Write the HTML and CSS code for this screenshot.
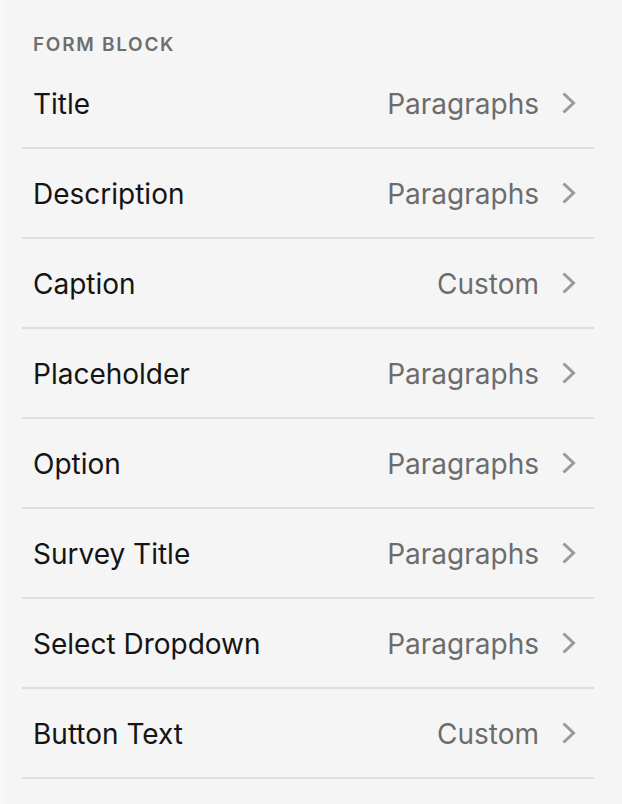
FILE: index.html
```html
<!DOCTYPE html>
<html>
<head>
<meta charset="utf-8">
<link rel="stylesheet" href="styles.css">
</head>
<body>
<div class="panel">
  <div class="section-title">FORM BLOCK</div>
  <ul class="list">
    <li class="row"><span class="label">Title</span><span class="value">Paragraphs</span><svg class="chev" viewBox="0 0 16 22"><path d="M3.5 1.5 L13.5 11 L3.5 20.5"/></svg></li>
    <li class="row"><span class="label">Description</span><span class="value">Paragraphs</span><svg class="chev" viewBox="0 0 16 22"><path d="M3.5 1.5 L13.5 11 L3.5 20.5"/></svg></li>
    <li class="row"><span class="label">Caption</span><span class="value">Custom</span><svg class="chev" viewBox="0 0 16 22"><path d="M3.5 1.5 L13.5 11 L3.5 20.5"/></svg></li>
    <li class="row"><span class="label">Placeholder</span><span class="value">Paragraphs</span><svg class="chev" viewBox="0 0 16 22"><path d="M3.5 1.5 L13.5 11 L3.5 20.5"/></svg></li>
    <li class="row"><span class="label">Option</span><span class="value">Paragraphs</span><svg class="chev" viewBox="0 0 16 22"><path d="M3.5 1.5 L13.5 11 L3.5 20.5"/></svg></li>
    <li class="row"><span class="label">Survey Title</span><span class="value">Paragraphs</span><svg class="chev" viewBox="0 0 16 22"><path d="M3.5 1.5 L13.5 11 L3.5 20.5"/></svg></li>
    <li class="row"><span class="label">Select Dropdown</span><span class="value">Paragraphs</span><svg class="chev" viewBox="0 0 16 22"><path d="M3.5 1.5 L13.5 11 L3.5 20.5"/></svg></li>
    <li class="row"><span class="label">Button Text</span><span class="value">Custom</span><svg class="chev" viewBox="0 0 16 22"><path d="M3.5 1.5 L13.5 11 L3.5 20.5"/></svg></li>
  </ul>
</div>
</body>
</html>
```

FILE: styles.css
```css
html, body {
  margin: 0;
  padding: 0;
  background: #f5f5f5;
}
body {
  width: 622px;
  height: 804px;
  overflow: hidden;
  font-family: Inter, "Liberation Sans", sans-serif;
  border-left: 5px solid #f7f7f7;
  box-sizing: border-box;
}
.panel {
  padding: 0 28px 0 17px;
}
.section-title {
  height: 59px;
  box-sizing: border-box;
  padding: 35px 0 0 11px;
  font-size: 19px;
  line-height: 20px;
  font-weight: 600;
  letter-spacing: 1.7px;
  color: #6e6e6e;
}
.list {
  list-style: none;
  margin: 0;
  padding: 0;
}
.row {
  display: flex;
  align-items: center;
  height: 86px;
  border-bottom: 2px solid #dedede;
  padding: 2px 18px 0 11px;
}
.label {
  flex: 1;
  font-size: 28px;
  color: #141414;
}
.value {
  font-size: 28px;
  color: #6c6c6c;
}
.chev {
  width: 16px;
  height: 22px;
  margin-left: 21px;
  margin-top: -2px;
  fill: none;
  stroke: #9a9a9a;
  stroke-width: 3;
}
```
